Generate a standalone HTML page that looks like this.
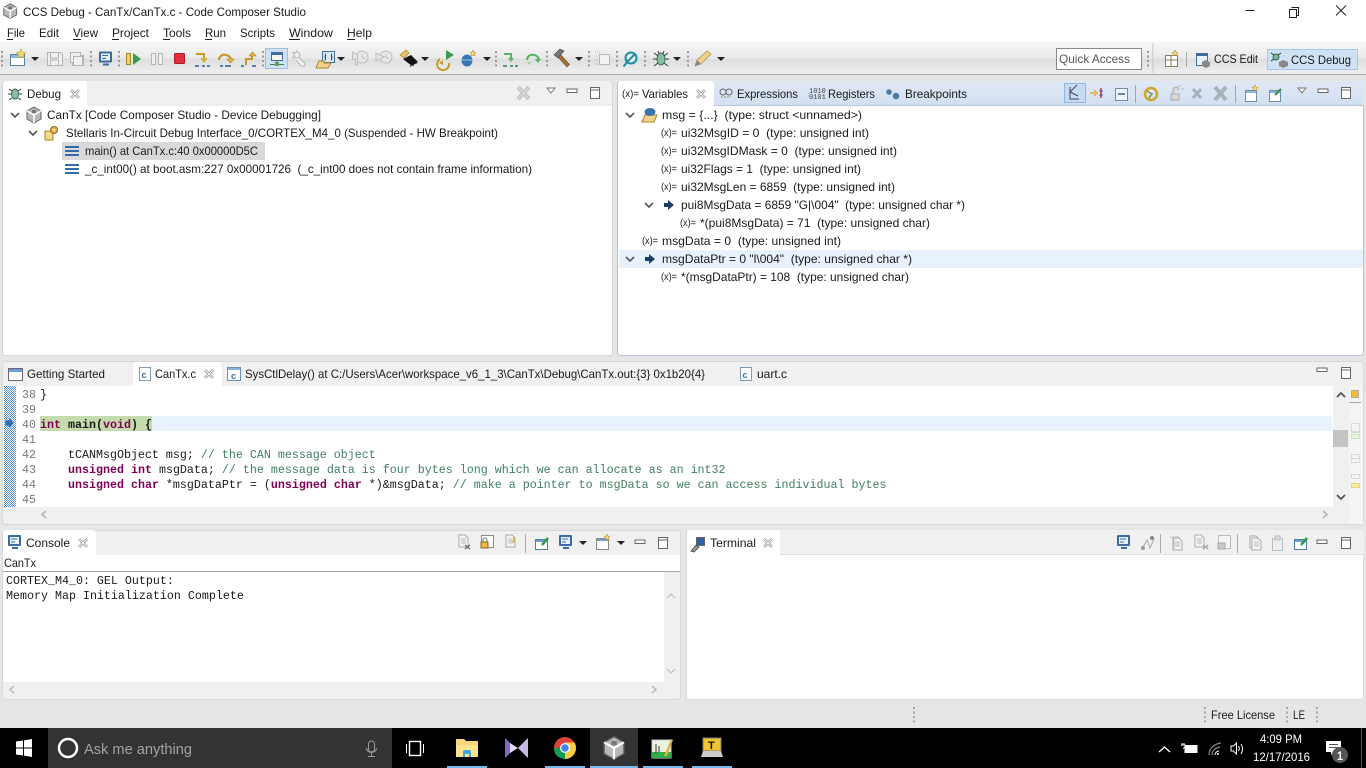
<!DOCTYPE html>
<html lang="en"><head><meta charset="utf-8"><title>CCS Debug - CanTx/CanTx.c - Code Composer Studio</title>
<style>
html,body{margin:0;padding:0;background:#e6e6e6;overflow:hidden}
svg{display:block}
text{font-family:"Liberation Sans",sans-serif;font-size:12px;fill:#1a1a1a;white-space:pre}
.m,.m tspan{font-family:"Liberation Mono",monospace;font-size:11.667px}
.n{fill:#787878;text-anchor:end}
.k{fill:#7f0055;font-weight:bold}
.c{fill:#3f7f5f}
</style></head><body>
<svg xmlns="http://www.w3.org/2000/svg" width="1366" height="768" viewBox="0 0 1366 768">
<defs>
<linearGradient id="tb" x1="0" y1="0" x2="0" y2="1"><stop offset="0" stop-color="#f8f8f8"/><stop offset=".5" stop-color="#eaeaea"/><stop offset=".56" stop-color="#dedede"/><stop offset="1" stop-color="#f0f0f0"/></linearGradient>
<linearGradient id="act" x1="0" y1="0" x2="0" y2="1"><stop offset="0" stop-color="#dfe8f5"/><stop offset="1" stop-color="#d3e0f2"/></linearGradient>
<pattern id="hatch" width="2" height="2" patternUnits="userSpaceOnUse"><rect width="2" height="2" fill="#fff"/><rect width="1" height="1" fill="#4f8fd0"/><rect x="1" y="1" width="1" height="1" fill="#4f8fd0"/></pattern>
<g id="x"><path d="M-4-4 4 4M4-4-4 4" stroke="#8a8a8a" stroke-width="2.6" fill="none"/><path d="M-4-4 4 4M4-4-4 4" stroke="#fff" stroke-width="1" fill="none"/></g>
<g id="min"><rect x="-5" y="-2" width="10" height="3.5" fill="#fff" stroke="#666"/></g>
<g id="max"><rect x="-4.5" y="-5.5" width="9" height="11" fill="#fff" stroke="#666"/><path d="M-4.5-3h9" stroke="#666"/></g>
<g id="menu"><path d="M-4-3H4L0 2Z" fill="#fff" stroke="#777"/></g>
<path id="dd" d="M-4-2H4L0 2Z" fill="#222"/>
<g id="ch"><path d="M-4-2 0 2 4-2" fill="none" stroke="#555" stroke-width="1.6"/></g>
<g id="vx"><text x="-8" y="3" style="font-size:10px;fill:#222" textLength="16" lengthAdjust="spacingAndGlyphs">(x)=</text></g>
<g id="frame"><path d="M-7-4H7M-7 0H7M-7 4H7" stroke="#2f6ca8" stroke-width="2"/></g>
<g id="dots"><path d="M0 0v16" stroke="#9a9a9a" stroke-width="2" stroke-dasharray="2 2.5"/></g>
<g id="term"><rect x="-7" y="-7" width="13" height="11" rx="1" fill="#3b6ba5"/><rect x="-5" y="-5" width="9" height="7" fill="#e8f0f8"/><path d="M-4-3h6M-4 0h4" stroke="#3b6ba5"/><path d="M-3 6H3" stroke="#3b6ba5" stroke-width="2"/></g>
<g id="cfile"><rect x="-5.5" y="-6.5" width="11" height="13" fill="#fff" stroke="#7f9db9"/><text x="-3.5" y="4" style="font-size:9px;font-weight:bold;fill:#3b6ba5">c</text></g>
<g id="ccs"><path d="M0-8 7-4V4L0 8-7 4V-4Z" fill="#b8b8b8" stroke="#666"/><path d="M-7-4 0 0 7-4M0 0V8" stroke="#fff" stroke-width="1.5" fill="none"/><rect x="-2" y="-5" width="4" height="3" fill="#777"/></g>
<g id="doc"><path d="M-4-6H2L5-3V6H-4Z" fill="#f4f4f4" stroke="#aaa"/><path d="M-2-2H3M-2 0H3M-2 2H3" stroke="#bbb"/></g>
</defs>

<!-- title & menu -->
<rect width="1366" height="42" fill="#fff"/>
<use href="#ccs" x="10" y="11" transform="translate(1 1) scale(.92) translate(0 0)"/>
<text x="23" y="16" textLength="283" lengthAdjust="spacingAndGlyphs">CCS Debug - CanTx/CanTx.c - Code Composer Studio</text>
<path d="M1245.5 10.500h9" stroke="#222"/>
<path d="M1291.500 7.500h7v8h-2M1291.500 7.500" fill="none" stroke="#222"/><rect x="1289.500" y="9.500" width="7" height="8" fill="#fff" stroke="#222"/>
<path d="M1336 5.500l10 10M1346 5.500l-10 10" stroke="#222" fill="none"/>
<g>
<text x="7" y="37" textLength="18" lengthAdjust="spacingAndGlyphs">File</text>
<text x="39" y="37" textLength="20" lengthAdjust="spacingAndGlyphs">Edit</text>
<text x="73" y="37" textLength="25" lengthAdjust="spacingAndGlyphs">View</text>
<text x="112" y="37" textLength="37" lengthAdjust="spacingAndGlyphs">Project</text>
<text x="163" y="37" textLength="28" lengthAdjust="spacingAndGlyphs">Tools</text>
<text x="205" y="37" textLength="21" lengthAdjust="spacingAndGlyphs">Run</text>
<text x="240" y="37" textLength="35" lengthAdjust="spacingAndGlyphs">Scripts</text>
<text x="289" y="37" textLength="44" lengthAdjust="spacingAndGlyphs">Window</text>
<text x="347" y="37" textLength="25" lengthAdjust="spacingAndGlyphs">Help</text>
<path d="M7 39.500h6M73 39.500h8M112 39.500h7M163 39.500h7M205 39.500h7M289 39.500h11M347 39.500h8" stroke="#222"/>
</g>

<!-- toolbar -->
<rect y="41" width="1366" height="33" fill="url(#tb)"/>
<rect y="74" width="1366" height="1" fill="#a8a8a8"/>
<use href="#dots" x="2" y="51"/><use href="#dots" x="91" y="51"/><use href="#dots" x="119" y="51"/><use href="#dots" x="263" y="51"/><use href="#dots" x="496" y="51"/><use href="#dots" x="547" y="51"/><use href="#dots" x="589" y="51"/><use href="#dots" x="617" y="51"/><use href="#dots" x="645" y="51"/><use href="#dots" x="688" y="51"/>
<!-- new -->
<rect x="10.500" y="54.500" width="14" height="11" fill="#fff" stroke="#5f7f9f"/><rect x="11" y="55" width="13" height="3" fill="#8db4dd"/><path d="M21 49l1.500 3 3 .5-2 2.500.5 3-3-1.500-3 1.500.5-3-2-2.500 3-.5Z" fill="#f3d777" stroke="#b89b3a" stroke-width=".6"/>
<use href="#dd" x="35" y="59"/>
<!-- save -->
<g fill="#f0f0f0" stroke="#b5b5b5"><path d="M47.500 52.500h13l2 2v11h-15Z"/><path d="M50.500 53v5h8v-5M50.500 65v-5h8v5" fill="none"/>
<path d="M70.500 52.500h10v3h3v10h-11v-3h-2Z"/><path d="M73.500 56.500h9v9h-9Z"/></g>
<use href="#term" x="106" y="58.500"/>
<!-- resume -->
<rect x="126.500" y="53.500" width="4" height="11" fill="#f0cf6a" stroke="#a5852a"/><path d="M133 53 141 59 133 65Z" fill="#3c9a52"/>
<rect x="151.500" y="53.500" width="4" height="11" fill="#f0f0f0" stroke="#b5b5b5"/><rect x="158.500" y="53.500" width="4" height="11" fill="#f0f0f0" stroke="#b5b5b5"/>
<rect x="174.500" y="53.500" width="10" height="10" rx="1" fill="#e62e3a" stroke="#a81e28"/>
<!-- steps -->
<g fill="none" stroke="#c79a2b" stroke-width="2"><path d="M196 54h8v6"/><path d="M201 58l3 4 3-4" fill="#e7b93f" stroke-width="1"/></g>
<path d="M195 66h4M202 66h3M207 66h3" stroke="#2f5f96" stroke-width="1.500"/>
<path d="M219 60c0-7 11-7 12 0" fill="none" stroke="#c79a2b" stroke-width="2.200"/><path d="M227 59h7l-3.500 4Z" fill="#e7b93f" stroke="#a5852a" stroke-width=".6"/><path d="M220 66h3M225 66h6" stroke="#2f5f96" stroke-width="1.500"/>
<path d="M246 65v-6h6v-3" fill="none" stroke="#c79a2b" stroke-width="2"/><path d="M249 56l3.500-4 3.500 4Z" fill="#e7b93f" stroke="#a5852a" stroke-width=".6"/><path d="M241 66h3" stroke="#2f5f96" stroke-width="1.500"/><path d="M252 66h4" stroke="#2f5f96" stroke-width="1.500"/>
<!-- selected toggle -->
<rect x="265.500" y="48.500" width="22" height="20" fill="#cfe1f5" stroke="#9dbfe2"/>
<rect x="271.500" y="52.500" width="11" height="8" fill="#f4f4f4" stroke="#3f6f9f"/><rect x="272" y="53" width="10" height="2" fill="#3f6f9f"/><path d="M277 61v3M270 64.500h14" stroke="#4b7a5a"/><rect x="275" y="62" width="4" height="4" fill="#58a35e"/>
<g stroke="#b5b5b5" fill="#eee"><circle cx="297" cy="55" r="3"/><path d="M298 57l7 6 0 3-4 0-5-6" /><path d="M292 52l2 1M292 58l2-1M297 50v2" fill="none"/></g>
<!-- folder -->
<rect x="322.500" y="51.500" width="12" height="11" fill="#dbe7f3" stroke="#3f6f9f"/><path d="M326 54c-1 0 0 2-1 3 1 1 0 3 1 3M331 54c1 0 0 2 1 3-1 1 0 3-1 3" fill="none" stroke="#234"/><path d="M316 68l3-7h5v2h7l-3 5Z" fill="#f3d287" stroke="#a5852a"/>
<use href="#dd" x="341" y="59"/>
<g fill="#e8e8e8" stroke="#bcbcbc"><circle cx="362" cy="57" r="6"/><path d="M352.500 52l5 3v10h-2v-6h-3Z"/><path d="M362 54v3l3 2" fill="none"/>
<circle cx="386" cy="57" r="6"/><path d="M376 53l8 4-8 4Z"/><path d="M386 54v3l3 2" fill="none"/></g>
<!-- chip -->
<path d="M400 55l6-5 3 3-5 5Z" fill="#e7c568" stroke="#a5852a" stroke-width=".7"/><path d="M403 59l8-4 7 7-6 4Z" fill="#111"/><path d="M410 67l1-2M413 66l1-2M416 64l1-2" stroke="#555"/>
<use href="#dd" x="425" y="59"/>
<path d="M440 59a6 6 0 1 0 9 4" fill="none" stroke="#c79a2b" stroke-width="2"/><path d="M446 50 454 55 446 60Z" fill="#3c9a52"/>
<path d="M439 63l4-3v5Z" fill="#c79a2b"/>
<ellipse cx="467" cy="60.500" rx="5.500" ry="6" fill="#3578b5"/><path d="M461.500 60h11" stroke="#9cc3e4"/><path d="M473 50l1 2 2 .5-1.500 1.500.5 2-2-1-2 1 .5-2-1.500-1.500 2-.5Z" fill="#f3d777" stroke="#a5852a" stroke-width=".5"/>
<use href="#dd" x="487" y="59"/>
<!-- green steps -->
<path d="M504 54h7v6" fill="none" stroke="#58b368" stroke-width="2"/><path d="M508 58l3 4 3-4Z" fill="#58b368"/><path d="M503 66h4M510 66h3M515 66h3" stroke="#3a7a58" stroke-width="1.500"/>
<path d="M527 60c0-7 11-7 12 0" fill="none" stroke="#58b368" stroke-width="2"/><path d="M535 59h6l-3 4Z" fill="#58b368"/><path d="M527 62h4l-2 3Z" fill="#58b368" opacity=".5"/>
<!-- hammer -->
<path d="M558 57l9 10 2.500-2.500-9-10Z" fill="#a8743a" stroke="#6a4420" stroke-width=".6"/><path d="M554 55l6-6 4 2-6 7Z" fill="#777" stroke="#444" stroke-width=".6"/>
<use href="#dd" x="579" y="59"/>
<rect x="599.500" y="54.500" width="10" height="10" fill="#f2f2f2" stroke="#b8b8b8"/><path d="M595 52h5M594 56h4M595 60h4M595 64h4" stroke="#bbb" stroke-dasharray="1 1"/>
<circle cx="631" cy="58" r="5.500" fill="#eaf4f6" stroke="#1d8aa5" stroke-width="2"/><path d="M635 54l-9 9M626.500 63l-3 3.500" stroke="#1d8aa5" stroke-width="2"/>
<!-- bug -->
<ellipse cx="661" cy="59" rx="4" ry="6" fill="#86bfa0" stroke="#3e6f5a"/><path d="M654 53l4 3M668 53l-4 3M653 59h4M669 59h-4M654 66l4-3M668 66l-4-3M658 51l1 3M664 51l-1 3" stroke="#3a3a3a"/>
<use href="#dd" x="677" y="59"/>
<path d="M695 66l2-6 10-9 4 3-10 10Z" fill="#f1d28a" stroke="#a58a4a" stroke-width=".7"/><path d="M695 66l2-6 4 4Z" fill="#888"/>
<use href="#dd" x="721" y="59"/>
<!-- quick access -->
<rect x="1056.500" y="48.500" width="85" height="21" fill="#fff" stroke="#8a8a8a"/>
<text x="1059" y="63" style="fill:#555" textLength="71" lengthAdjust="spacingAndGlyphs">Quick Access</text>
<use href="#dots" x="1148" y="51"/>
<path d="M1153 43c-.500 10 0 20 0 30" stroke="#c8c8c8" fill="none"/>
<rect x="1165.500" y="55.500" width="12" height="11" fill="#fff" stroke="#8a7a5a"/><path d="M1165 60h13M1171 56v10" stroke="#8a7a5a"/><path d="M1175 50l1 2 2 .5-1.500 1.500.5 2-2-1-2 1 .5-2-1.500-1.500 2-.5Z" fill="#f3d777" stroke="#a5852a" stroke-width=".5"/>
<path d="M1186.500 52v15" stroke="#aaa"/>
<rect x="1196.500" y="53.500" width="11" height="12" fill="#e8f0f8" stroke="#3f6f9f"/><rect x="1197" y="54" width="10" height="2" fill="#3f6f9f"/><path d="M1205 60l5 2v4l-4 2-4-2v-4Z" fill="#888"/>
<text x="1214" y="63" textLength="44" lengthAdjust="spacingAndGlyphs">CCS Edit</text>
<rect x="1267.500" y="49.500" width="90" height="20" fill="#cfe1f5" stroke="#a9c8e8"/>
<circle cx="1276" cy="57" r="3" fill="#7fb59a" stroke="#3e6f5a"/><path d="M1271 53l3 2M1281 53l-3 2M1271 61l3-2" stroke="#333"/><path d="M1283 60l5 2v4l-5 2-4-2v-4Z" fill="#888"/>
<text x="1291" y="64" textLength="60" lengthAdjust="spacingAndGlyphs">CCS Debug</text>

<!-- debug panel -->
<rect x="2.500" y="81.500" width="610" height="274" rx="3" fill="#fff" stroke="#d8d8d8"/>
<path d="M3 105V84a3 3 0 0 1 3-3H609a3 3 0 0 1 3 3V105Z" fill="#f0f0f0"/>
<path d="M3 105V84a3 3 0 0 1 3-3H84a3 3 0 0 1 3 3V105Z" fill="#fff"/>
<path d="M87 105H612" stroke="#e2e2e2"/>
<ellipse cx="15" cy="94" rx="3.500" ry="5" fill="#86bfa0" stroke="#3e6f5a"/><path d="M9 89l3 2M21 89l-3 2M8 94h3M22 94h-3M9 100l3-2M21 100l-3-2" stroke="#333"/>
<text x="27" y="98" textLength="34" lengthAdjust="spacingAndGlyphs">Debug</text>
<use href="#x" x="75" y="94"/>
<path d="M518 87l11 12M529 87l-11 12" stroke="#bdbdbd" stroke-width="4"/><path d="M518 87l11 12M529 87l-11 12" stroke="#d6d6d6" stroke-width="2"/>
<use href="#menu" x="551" y="91"/><use href="#min" x="572" y="91"/><use href="#max" x="595" y="93"/>
<use href="#ch" x="15" y="115"/>
<use href="#ccs" x="34" y="115"/>
<text x="47" y="119" textLength="274" lengthAdjust="spacingAndGlyphs">CanTx [Code Composer Studio - Device Debugging]</text>
<use href="#ch" x="33" y="133"/>
<rect x="45" y="131" width="8" height="9" fill="#f5d98a" stroke="#a5852a"/><circle cx="54" cy="130" r="3.500" fill="#e8b040" stroke="#8a6a20"/><circle cx="54" cy="130" r="1" fill="#fff"/>
<text x="66" y="137" textLength="432" lengthAdjust="spacingAndGlyphs">Stellaris In-Circuit Debug Interface_0/CORTEX_M4_0 (Suspended - HW Breakpoint)</text>
<rect x="62" y="142" width="203" height="18" fill="#d9d9d9"/>
<use href="#frame" x="72" y="151"/>
<text x="85" y="155" textLength="173" lengthAdjust="spacingAndGlyphs">main() at CanTx.c:40 0x00000D5C</text>
<use href="#frame" x="72" y="169"/>
<text x="85" y="173" textLength="447" lengthAdjust="spacingAndGlyphs">_c_int00() at boot.asm:227 0x00001726  (_c_int00 does not contain frame information)</text>

<!-- variables panel -->
<rect x="617.500" y="81.500" width="746" height="274" rx="3" fill="#fff" stroke="#b4c2d4"/>
<path d="M618 105V84a3 3 0 0 1 3-3H1361a3 3 0 0 1 3 3V105Z" fill="url(#act)"/>
<path d="M618 105V84a3 3 0 0 1 3-3H711a3 3 0 0 1 3 3V105Z" fill="#fff"/>
<path d="M714 105.500H1364" stroke="#b8c8dc"/>
<text x="622" y="97" style="font-size:10px" textLength="17" lengthAdjust="spacingAndGlyphs">(x)=</text>
<text x="642" y="98" textLength="46" lengthAdjust="spacingAndGlyphs">Variables</text>
<use href="#x" x="701" y="94"/>
<circle cx="723" cy="92" r="3" fill="none" stroke="#666"/><circle cx="729" cy="92" r="3" fill="none" stroke="#666"/><path d="M721 97h10" stroke="#7a9a6a" stroke-dasharray="2 1"/>
<text x="737" y="98" textLength="61" lengthAdjust="spacingAndGlyphs">Expressions</text>
<text x="809" y="93" style="font-size:7px;font-family:'Liberation Mono',monospace;fill:#444">1010</text><text x="809" y="99" style="font-size:7px;font-family:'Liberation Mono',monospace;fill:#444">0101</text>
<text x="828" y="98" textLength="47" lengthAdjust="spacingAndGlyphs">Registers</text>
<circle cx="889" cy="92" r="2.800" fill="#4a7ba7"/><circle cx="896" cy="96" r="3.300" fill="#4a7ba7"/>
<text x="905" y="98" textLength="62" lengthAdjust="spacingAndGlyphs">Breakpoints</text>
<rect x="1064.500" y="83.500" width="21" height="19" fill="#c6dcf4" stroke="#93b8e0"/><path d="M1070 87v12h9M1077 85l-7 7 8 4" fill="none" stroke="#445"/>
<path d="M1090 93h6M1094 90l3 3-3 3" fill="none" stroke="#e0b040" stroke-width="1.500"/><path d="M1101 88v10" stroke="#c33" stroke-width="1.500"/><path d="M1099 91h4M1099 95h4" stroke="#36c"/>
<rect x="1115.500" y="88.500" width="12" height="12" fill="#eef3f9" stroke="#6f8fb0"/><path d="M1118 94h7" stroke="#3a5f8f" stroke-width="1.500"/>
<path d="M1135.500 85v18" stroke="#9aa8ba"/>
<circle cx="1151" cy="94" r="6" fill="none" stroke="#d0a52a" stroke-width="2.500"/><path d="M1147 91l5 3-3 4" stroke="#7a9a3a" fill="none" stroke-width="1.500"/>
<path d="M1171 94v6h8v-6ZM1173 94v-4a3 3 0 0 1 6 0" fill="#d8d8d8" stroke="#aaa"/><path d="M1178 86h3M1181 89h3" stroke="#bbb"/>
<path d="M1193 89l8 9M1201 89l-8 9" stroke="#a8b0ba" stroke-width="3"/>
<path d="M1215 87l11 13M1226 87l-11 13" stroke="#a8b0ba" stroke-width="4"/>
<path d="M1235.500 85v18" stroke="#9aa8ba"/>
<rect x="1245.500" y="90.500" width="11" height="11" fill="#fff" stroke="#6f8f9f"/><rect x="1246" y="91" width="10" height="2" fill="#8db4dd"/><path d="M1255 85l1 2 2 .5-1.500 1.500.5 2-2-1-2 1 .5-2-1.500-1.500 2-.5Z" fill="#f3d777" stroke="#a5852a" stroke-width=".5"/>
<rect x="1269.500" y="90.500" width="11" height="11" fill="#fff" stroke="#6f8f9f"/><rect x="1270" y="91" width="10" height="2" fill="#8db4dd"/><path d="M1275 95l6-6" stroke="#3a8a4a" stroke-width="2"/>
<use href="#menu" x="1302" y="91"/><use href="#min" x="1323" y="91"/><use href="#max" x="1346" y="93"/>
<rect x="619" y="250" width="744" height="18" fill="#e8f2fc"/>
<use href="#ch" x="630" y="115"/>
<path d="M642 122l3-7h12l-3 7Z" fill="#f3d287" stroke="#a5852a"/><ellipse cx="650" cy="112" rx="5.500" ry="4" fill="#3b75ad"/>
<text x="662" y="119" textLength="200" lengthAdjust="spacingAndGlyphs">msg = {...}  (type: struct &lt;unnamed&gt;)</text>
<use href="#vx" x="669" y="133"/><text x="681" y="137" textLength="188" lengthAdjust="spacingAndGlyphs">ui32MsgID = 0  (type: unsigned int)</text>
<use href="#vx" x="669" y="151"/><text x="681" y="155" textLength="216" lengthAdjust="spacingAndGlyphs">ui32MsgIDMask = 0  (type: unsigned int)</text>
<use href="#vx" x="669" y="169"/><text x="681" y="173" textLength="180" lengthAdjust="spacingAndGlyphs">ui32Flags = 1  (type: unsigned int)</text>
<use href="#vx" x="669" y="187"/><text x="681" y="191" textLength="214" lengthAdjust="spacingAndGlyphs">ui32MsgLen = 6859  (type: unsigned int)</text>
<use href="#ch" x="649" y="205"/>
<path d="M664 203h4v-3l6 5-6 5v-3h-4Z" fill="#1d3f66"/>
<text x="681" y="209" textLength="284" lengthAdjust="spacingAndGlyphs">pui8MsgData = 6859 "G|\004"  (type: unsigned char *)</text>
<use href="#vx" x="688" y="223"/><text x="700" y="227" textLength="230" lengthAdjust="spacingAndGlyphs">*(pui8MsgData) = 71  (type: unsigned char)</text>
<use href="#vx" x="650" y="241"/><text x="662" y="245" textLength="179" lengthAdjust="spacingAndGlyphs">msgData = 0  (type: unsigned int)</text>
<use href="#ch" x="630" y="259"/>
<path d="M645 257h4v-3l6 5-6 5v-3h-4Z" fill="#1d3f66"/>
<text x="662" y="263" textLength="250" lengthAdjust="spacingAndGlyphs">msgDataPtr = 0 "l\004"  (type: unsigned char *)</text>
<use href="#vx" x="669" y="277"/><text x="681" y="281" textLength="228" lengthAdjust="spacingAndGlyphs">*(msgDataPtr) = 108  (type: unsigned char)</text>

<!-- editor -->
<rect x="2.500" y="361.500" width="1361" height="163" rx="3" fill="#f0f0f0" stroke="#d8d8d8"/>
<path d="M133 386V365a3 3 0 0 1 3-3H219a3 3 0 0 1 3 3V386Z" fill="#fff"/>
<rect x="8.500" y="368.500" width="14" height="12" fill="#fff" stroke="#667"/><rect x="9" y="369" width="13" height="3" fill="#6d9fd4"/>
<text x="27" y="378" textLength="78" lengthAdjust="spacingAndGlyphs">Getting Started</text>
<use href="#cfile" x="145" y="374"/>
<text x="155" y="378" textLength="41" lengthAdjust="spacingAndGlyphs">CanTx.c</text>
<use href="#x" x="209" y="374"/>
<rect x="227.500" y="367.500" width="13" height="13" fill="#fff" stroke="#6f8faf"/><rect x="228" y="368" width="12" height="2" fill="#8db4dd"/><text x="231" y="379" style="font-size:9px;font-weight:bold;fill:#3b6ba5">c</text>
<text x="245" y="378" textLength="460" lengthAdjust="spacingAndGlyphs">SysCtlDelay() at C:/Users\Acer\workspace_v6_1_3\CanTx\Debug\CanTx.out:{3} 0x1b20{4}</text>
<use href="#cfile" x="746" y="374"/>
<text x="757" y="378" textLength="30" lengthAdjust="spacingAndGlyphs">uart.c</text>
<use href="#min" x="1322" y="370"/><use href="#max" x="1346" y="373"/>
<rect x="4" y="386" width="1329" height="121" fill="#fff"/>
<rect x="4" y="386" width="12" height="121" fill="url(#hatch)"/>
<rect x="16" y="386" width="24" height="121" fill="#fff"/>
<rect x="40" y="416" width="1292" height="15" fill="#e8f2fc"/>
<rect x="40" y="416" width="112" height="15" fill="#c4dbae"/>
<path d="M5 420h4v-3l5 6-5 6v-3H5Z" fill="#2f6fb0" stroke="#cde" stroke-width=".5"/>
<g class="m">
<text class="m n" x="36" y="398">38</text><text class="m" x="40" y="398">}</text>
<text class="m n" x="36" y="413">39</text>
<text class="m n" x="36" y="428">40</text><text class="m" x="40" y="428" style="font-weight:bold"><tspan class="k">int</tspan> <tspan style="font-weight:bold">main</tspan><tspan style="font-weight:bold">(</tspan><tspan class="k">void</tspan><tspan style="font-weight:bold">) {</tspan></text>
<text class="m n" x="36" y="443">41</text>
<text class="m n" x="36" y="458">42</text><text class="m" x="40" y="458">    tCANMsgObject msg; <tspan class="c">// the CAN message object</tspan></text>
<text class="m n" x="36" y="473">43</text><text class="m" x="40" y="473">    <tspan class="k">unsigned</tspan> <tspan class="k">int</tspan> msgData; <tspan class="c">// the message data is four bytes long which we can allocate as an int32</tspan></text>
<text class="m n" x="36" y="488">44</text><text class="m" x="40" y="488">    <tspan class="k">unsigned</tspan> <tspan class="k">char</tspan> *msgDataPtr = (<tspan class="k">unsigned</tspan> <tspan class="k">char</tspan> *)&amp;msgData; <tspan class="c">// make a pointer to msgData so we can access individual bytes</tspan></text>
<text class="m n" x="36" y="503">45</text>
</g>
<rect x="1333" y="386" width="15" height="121" fill="#f0f0f0"/>
<rect x="1333" y="430" width="15" height="17" fill="#c4c4c4"/>
<path d="M1337 397l4-4 4 4M1337 495l4 4 4-4" fill="none" stroke="#555" stroke-width="1.800"/>
<path d="M46 511l-4 3.500 4 3.500M1323 511l4 3.500-4 3.500" fill="none" stroke="#b5b5b5" stroke-width="1.600"/>
<rect x="1349" y="386" width="14" height="138" fill="#f4f4f4"/>
<rect x="1351.500" y="390.500" width="7" height="7" fill="#f0c030" stroke="#aaa"/>
<path d="M1349 402.500h12" stroke="#aaa"/>
<g fill="none" stroke="#d8d8d8"><rect x="1351.500" y="423.500" width="8" height="8"/><rect x="1351.500" y="431.500" width="8" height="1"/><rect x="1351.500" y="454.500" width="8" height="8"/><path d="M1351.500 458.500h8"/><rect x="1351.500" y="474.500" width="8" height="4"/></g>
<rect x="1351.500" y="434.500" width="8" height="4" fill="#eaf4e0" stroke="#cfe4bd"/>
<rect x="1351.500" y="483.500" width="8" height="4" fill="#fbeaa8" stroke="#ecd27a"/>

<!-- console -->
<rect x="2.500" y="530.500" width="678" height="169" rx="3" fill="#f0f0f0" stroke="#d8d8d8"/>
<path d="M3 555V533a3 3 0 0 1 3-3H93a3 3 0 0 1 3 3V555Z" fill="#fff"/>
<rect x="3" y="555" width="677" height="16" fill="#fff"/>
<rect x="3" y="571" width="677" height="1" fill="#a8a8a8"/>
<rect x="3" y="572" width="661" height="110" fill="#fff"/>
<use href="#term" x="15" y="542"/>
<text x="26" y="547" textLength="44" lengthAdjust="spacingAndGlyphs">Console</text>
<use href="#x" x="83" y="543"/>
<text x="4" y="567" textLength="32" lengthAdjust="spacingAndGlyphs">CanTx</text>
<text class="m" x="6" y="584">CORTEX_M4_0: GEL Output:</text>
<text class="m" x="6" y="599">Memory Map Initialization Complete</text>
<use href="#doc" x="463" y="541"/><path d="M465 545l5 4M470 545l-5 4" stroke="#777" stroke-width="1.500"/>
<rect x="481.500" y="535.500" width="12" height="12" fill="#fff" stroke="#8a8a8a"/><rect x="481" y="542" width="7" height="6" fill="#e8b840" stroke="#8a6a20"/><path d="M483 542v-2a2 2 0 0 1 4 0v2" fill="none" stroke="#777"/>
<use href="#doc" x="510" y="541"/><path d="M514 536v6l-3-1" stroke="#d8b850" fill="none" stroke-width="1.500"/>
<path d="M525.500 534v19" stroke="#aaa"/>
<rect x="535.500" y="539.500" width="12" height="10" fill="#fff" stroke="#4f7f9f"/><rect x="536" y="540" width="11" height="2" fill="#6fa0cf"/><path d="M542 545l6-7" stroke="#2f9a4a" stroke-width="2.500"/>
<use href="#term" x="566" y="542"/><use href="#dd" x="583" y="543"/>
<rect x="596.500" y="538.500" width="12" height="11" fill="#fff" stroke="#888"/><rect x="597" y="539" width="11" height="2" fill="#6fa0cf"/><path d="M607 534l1 2 2 .5-1.500 1.500.5 2-2-1-2 1 .5-2-1.500-1.500 2-.5Z" fill="#f3d777" stroke="#a5852a" stroke-width=".5"/>
<use href="#dd" x="621" y="543"/>
<use href="#min" x="640" y="542"/><use href="#max" x="663" y="543"/>
<path d="M667 598l4-4 4 4M667 669l4 4 4-4" fill="none" stroke="#c8c8c8" stroke-width="1.500"/>
<path d="M14 686l-4 3.500 4 3.500M652 686l4 3.500-4 3.500" fill="none" stroke="#bbb" stroke-width="1.500"/>

<!-- terminal -->
<rect x="686.500" y="530.500" width="677" height="169" rx="3" fill="#fff" stroke="#d8d8d8"/>
<path d="M687 554V533a3 3 0 0 1 3-3H1361a3 3 0 0 1 3 3V554Z" fill="#f0f0f0"/>
<path d="M687 554V533a3 3 0 0 1 3-3H777a3 3 0 0 1 3 3V554Z" fill="#fff"/>
<path d="M780 554.500H1364" stroke="#e2e2e2"/>
<rect x="696.500" y="537.500" width="8" height="8" fill="#3060b0" stroke="#666"/><path d="M691 551l5-6 3 2-5 5Z" fill="#999" stroke="#444" stroke-width=".8"/>
<text x="710" y="547" textLength="46" lengthAdjust="spacingAndGlyphs">Terminal</text>
<use href="#x" x="768" y="543"/>
<use href="#term" x="1124" y="542"/>
<path d="M1142 549l5-9 3 8 4-9" fill="none" stroke="#aaa"/><circle cx="1143" cy="548" r="2" fill="#999"/><circle cx="1152" cy="538" r="2" fill="#888"/>
<path d="M1160.500 534v19" stroke="#aaa"/>
<use href="#doc" x="1177" y="544"/><path d="M1170 537h9M1174 537v12" stroke="#c5c5c5"/>
<use href="#doc" x="1199" y="541"/><path d="M1203 545l5 4M1208 545l-5 4" stroke="#aaa" stroke-width="1.500"/>
<rect x="1218.500" y="535.500" width="12" height="13" fill="#f4f4f4" stroke="#bbb"/><rect x="1218" y="543" width="7" height="6" fill="#c8c8c8" stroke="#aaa"/>
<path d="M1237.500 534v19" stroke="#aaa"/>
<use href="#doc" x="1254" y="542"/><use href="#doc" x="1256" y="544"/>
<rect x="1272.500" y="538.500" width="10" height="12" fill="#eee" stroke="#bbb"/><rect x="1275" y="536" width="5" height="4" fill="#ddd" stroke="#bbb"/>
<rect x="1294.500" y="539.500" width="12" height="10" fill="#fff" stroke="#4f7f9f"/><rect x="1295" y="540" width="11" height="2" fill="#6fa0cf"/><path d="M1301 545l6-7" stroke="#2f9a4a" stroke-width="2.500"/>
<use href="#min" x="1322" y="542"/><use href="#max" x="1346" y="543"/>

<!-- status bar -->
<rect y="700" width="1366" height="28" fill="#e5e5e5"/>
<path d="M914 707v16M1205 707v16M1287 707v16M1317 707v16" stroke="#a8a8a8" stroke-width="2" stroke-dasharray="2 2.500"/>
<text x="1211" y="719" textLength="64" lengthAdjust="spacingAndGlyphs">Free License</text>
<text x="1293" y="719" textLength="12" lengthAdjust="spacingAndGlyphs">LE</text>

<!-- taskbar -->
<rect y="728" width="1366" height="40" fill="#000"/>
<rect x="48" y="728" width="344" height="40" fill="#333"/>
<path d="M16 741.500l7-1v7h-7ZM24 740.400l8-1.400v8.500h-8ZM16 748.500h7v7l-7-1ZM24 748.500h8V757l-8-1.400Z" fill="#fff"/>
<circle cx="68" cy="748" r="9" fill="none" stroke="#fff" stroke-width="2.400"/>
<text x="84" y="754" style="font-size:15px;fill:#a3a3a3" textLength="108" lengthAdjust="spacingAndGlyphs">Ask me anything</text>
<rect x="368.500" y="741" width="6" height="11" rx="3" fill="none" stroke="#999"/><path d="M366.500 748c0 6 10 6 10 0M371.500 752v4M368 756.500h7" fill="none" stroke="#999"/>
<rect x="409.500" y="741.500" width="11" height="14" fill="none" stroke="#fff" stroke-width="1.400"/><path d="M406.500 744v9M423.500 744v9" stroke="#fff"/>
<!-- explorer -->
<path d="M456 739h8l2 2h12v16h-22Z" fill="#f6d77a"/><rect x="456" y="745" width="22" height="12" fill="#fbe38f"/><path d="M463 757v-5a2 2 0 0 1 2-2h4a2 2 0 0 1 2 2v5h-2v-3h-4v3Z" fill="#3da9d8"/>
<rect x="447" y="766" width="40" height="2" fill="#76b9ed"/>
<!-- VS -->
<path d="M505 738l10 10-10 10ZM528 738v20l-10-10Z" fill="#8468c8"/><path d="M510 743l8 5-8 5Z" fill="#e0d8f4"/><path d="M528 738l-10 10 10 10Z" fill="#fff" opacity=".55"/>
<!-- chrome -->
<circle cx="565" cy="748" r="11" fill="#db4437"/><path d="M565 748l-9.500 5.500A11 11 0 0 0 565 759l5-2Z" fill="#0f9d58"/><path d="M554 748a11 11 0 0 0 5 9.500L565 748Z" fill="#0f9d58"/><path d="M565 759a11 11 0 0 0 9.500-16.500H565Z" fill="#ffcd40"/><circle cx="565" cy="748" r="5" fill="#fff"/><circle cx="565" cy="748" r="3.800" fill="#4285f4"/>
<rect x="545" y="766" width="40" height="2" fill="#76b9ed"/>
<!-- ccs -->
<rect x="590" y="728" width="48" height="40" fill="#333"/>
<use href="#ccs" transform="translate(614 748) scale(1.400)"/>
<rect x="590" y="766" width="48" height="2" fill="#76b9ed"/>
<!-- notepad -->
<rect x="652" y="740" width="19" height="18" fill="#e8f4e0" stroke="#ccc"/><rect x="652" y="752" width="19" height="6" fill="#2fae4a"/><path d="M656 744v9M659 746v6" stroke="#333"/><path d="M664 756l7-17 2 1-6 16Z" fill="#e8b040"/>
<rect x="643" y="766" width="40" height="2" fill="#76b9ed"/>
<!-- T -->
<rect x="703" y="738" width="18" height="13" fill="#f0c530" stroke="#777"/><text x="708" y="749" style="font-size:11px;font-weight:bold;fill:#111">T</text><path d="M701 757l2-6h18l2 6Z" fill="#ccc"/>
<rect x="692" y="766" width="40" height="2" fill="#76b9ed"/>
<!-- tray -->
<path d="M1159 752l5.500-5 5.500 5" fill="none" stroke="#fff" stroke-width="1.300"/>
<rect x="1185" y="745.500" width="12" height="7" fill="#fff" stroke="#fff"/><path d="M1182 745v-2M1184 745v-2M1181 745h4v2l-2 1.500" fill="none" stroke="#fff"/>
<path d="M1209 755c0-7 5-11 12-12M1212 755c0-4 3-7 8-8" fill="none" stroke="#8a8a8a" stroke-width="1.200"/><path d="M1215 755c0-2 2-4 4-4" fill="none" stroke="#fff"/><circle cx="1218" cy="754" r="1" fill="#fff"/>
<path d="M1231 746v5h2.500l3 3v-11l-3 3Z" fill="none" stroke="#fff"/><path d="M1238.500 746c1 1.500 1 3.500 0 5M1241 744c2 3 2 7 0 10" fill="none" stroke="#fff"/>
<text x="1260" y="743" style="fill:#fff" textLength="42" lengthAdjust="spacingAndGlyphs">4:09 PM</text>
<text x="1253" y="761" style="fill:#fff" textLength="57" lengthAdjust="spacingAndGlyphs">12/17/2016</text>
<path d="M1326 741h15v11h-7l-3 3v-3h-5Z" fill="#fff"/><path d="M1329 744.500h9M1329 747.500h9" stroke="#555"/>
<circle cx="1340" cy="755" r="8" fill="#555"/>
<text x="1337" y="760" style="fill:#fff;font-weight:bold" textLength="6" lengthAdjust="spacingAndGlyphs">1</text>
<path d="M1361.500 728v40" stroke="#555"/>
</svg>
</body></html>
